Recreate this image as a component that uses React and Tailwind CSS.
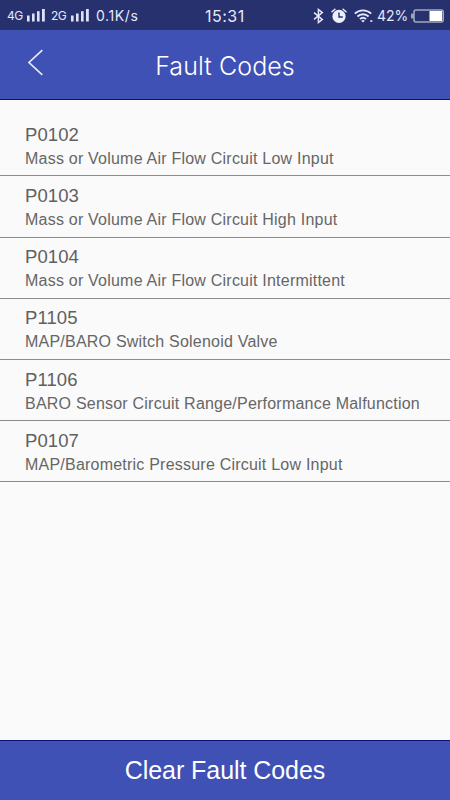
import React from "react";

const faults = [
  { code: "P0102", description: "Mass or Volume Air Flow Circuit Low Input" },
  { code: "P0103", description: "Mass or Volume Air Flow Circuit High Input" },
  { code: "P0104", description: "Mass or Volume Air Flow Circuit Intermittent" },
  { code: "P1105", description: "MAP/BARO Switch Solenoid Valve" },
  { code: "P1106", description: "BARO Sensor Circuit Range/Performance Malfunction" },
  { code: "P0107", description: "MAP/Barometric Pressure Circuit Low Input" },
];

function SignalBars() {
  return (
    <svg className="h-[13px] w-[18px] shrink-0" viewBox="0 0 18 13" fill="#dfe3fa">
      <rect x="0" y="6.5" width="2.6" height="6" />
      <rect x="5" y="4.5" width="2.6" height="8" />
      <rect x="10" y="2.2" width="2.6" height="10.3" />
      <rect x="15" y="0" width="2.8" height="12.5" />
    </svg>
  );
}

function BluetoothIcon() {
  return (
    <svg className="h-4 w-[11px] shrink-0" viewBox="0 0 11 16" fill="none" stroke="#e4e8fb" strokeWidth="1.5">
      <path d="M1 4.6 9.3 11.4 5.4 14.5V1.5L9.3 4.6 1 11.4" />
    </svg>
  );
}

function AlarmIcon() {
  return (
    <svg className="ml-[7px] h-4 w-4 shrink-0" viewBox="0 0 16 16" fill="none">
      <circle cx="8" cy="8.4" r="6.6" fill="#eceffd" />
      <path d="M1 3.8 3.9 1.3M15 3.8 12.1 1.3" stroke="#eceffd" strokeWidth="1.5" strokeLinecap="round" />
      <path d="M8 4.4V9h3.8" stroke="#27316e" strokeWidth="1.4" />
    </svg>
  );
}

function WifiIcon() {
  return (
    <svg className="ml-[7px] h-[14px] w-[19px] shrink-0" viewBox="0 0 19 14" fill="none" stroke="#e4e8fb" strokeWidth="1.8">
      <path d="M.8 4.6C5.3.2 12.7.2 17.2 4.6" />
      <path d="M3.4 7.5c3.1-3 8.1-3 11.2 0" />
      <path d="M5.9 10.1c1.8-1.6 4.4-1.6 6.2 0" />
      <path d="M7.2 11.7c1-.8 2.6-.8 3.6 0L9 13.6z" fill="#e4e8fb" stroke="none" />
      <rect x="16.3" y="11" width="2" height="2" fill="#c5cbed" stroke="none" />
    </svg>
  );
}

function BatteryIcon() {
  return (
    <svg className="ml-1 h-[14px] w-[33px] shrink-0" viewBox="0 0 33 14" fill="none">
      <rect x="0" y="4.5" width="2.5" height="5" rx="1" fill="#a4a8bd" />
      <rect x="3" y="1" width="29.2" height="12" rx="2" stroke="#a4a8bd" strokeWidth="1.6" />
      <rect x="18.5" y="2" width="12.5" height="10" fill="#ffffff" />
    </svg>
  );
}

function StatusBar() {
  return (
    <div className="flex h-[30px] items-center bg-[#27316e] pt-px text-[#e4e8fb]">
      <div className="flex w-[205px] items-center pl-[7px]">
        <span className="w-[20px] text-[12px] tracking-[-0.5px]">4G</span>
        <SignalBars />
        <span className="ml-[6px] w-[20px] text-[12px] tracking-[-0.5px]">2G</span>
        <SignalBars />
        <span className="ml-[7px] text-[14px] tracking-[0.6px] whitespace-nowrap">0.1K/s</span>
      </div>
      <span className="text-[16px] tracking-[0.5px]">15:31</span>
      <div className="ml-auto flex items-center pr-[6px]">
        <BluetoothIcon />
        <AlarmIcon />
        <WifiIcon />
        <span className="ml-[4px] w-[30px] text-[14px] tracking-[-0.1px]">42%</span>
        <BatteryIcon />
      </div>
    </div>
  );
}

function Header() {
  return (
    <header className="grid h-[70px] grid-cols-[1fr_auto_1fr] items-center border-b border-[#07107c] bg-[#3f51b5] text-white">
      <button type="button" aria-label="Back" className="ml-[27px] w-fit pb-[4px]">
        <svg className="h-[27px] w-[17px]" viewBox="0 0 17 27" fill="none" stroke="#e6eafc" strokeWidth="1.7">
          <path d="M15.3 1.2 2 13.5 15.3 25.8" />
        </svg>
      </button>
      <h1 className="pt-[2px] text-[25px] leading-[30px] font-[350] tracking-[0.08px]">Fault Codes</h1>
    </header>
  );
}

export default function App() {
  return (
    <div className="flex h-screen w-full flex-col overflow-hidden bg-[#fafafa] font-[Inter,sans-serif]">
      <StatusBar />
      <Header />
      <ul className="flex-1 pt-[15.2px] font-['Liberation_Sans',Arial,sans-serif]">
        {faults.map(({ code, description }) => (
          <li key={code} className="h-[61.2px] border-b border-[#8c8c8c] pt-[7.7px] pl-[25px] whitespace-nowrap">
            <p className="text-[18.5px] leading-[24px] tracking-[0.1px] text-[#606060]">{code}</p>
            <p className="text-[16px] leading-[23px] tracking-[0.22px] text-[#666666]">{description}</p>
          </li>
        ))}
      </ul>
      <button
        type="button"
        className="h-[60px] border-t border-[#07107c] bg-[#3f51b5] font-['Liberation_Sans',Arial,sans-serif] text-[25px] tracking-[-0.06px] text-white"
      >
        Clear Fault Codes
      </button>
    </div>
  );
}
